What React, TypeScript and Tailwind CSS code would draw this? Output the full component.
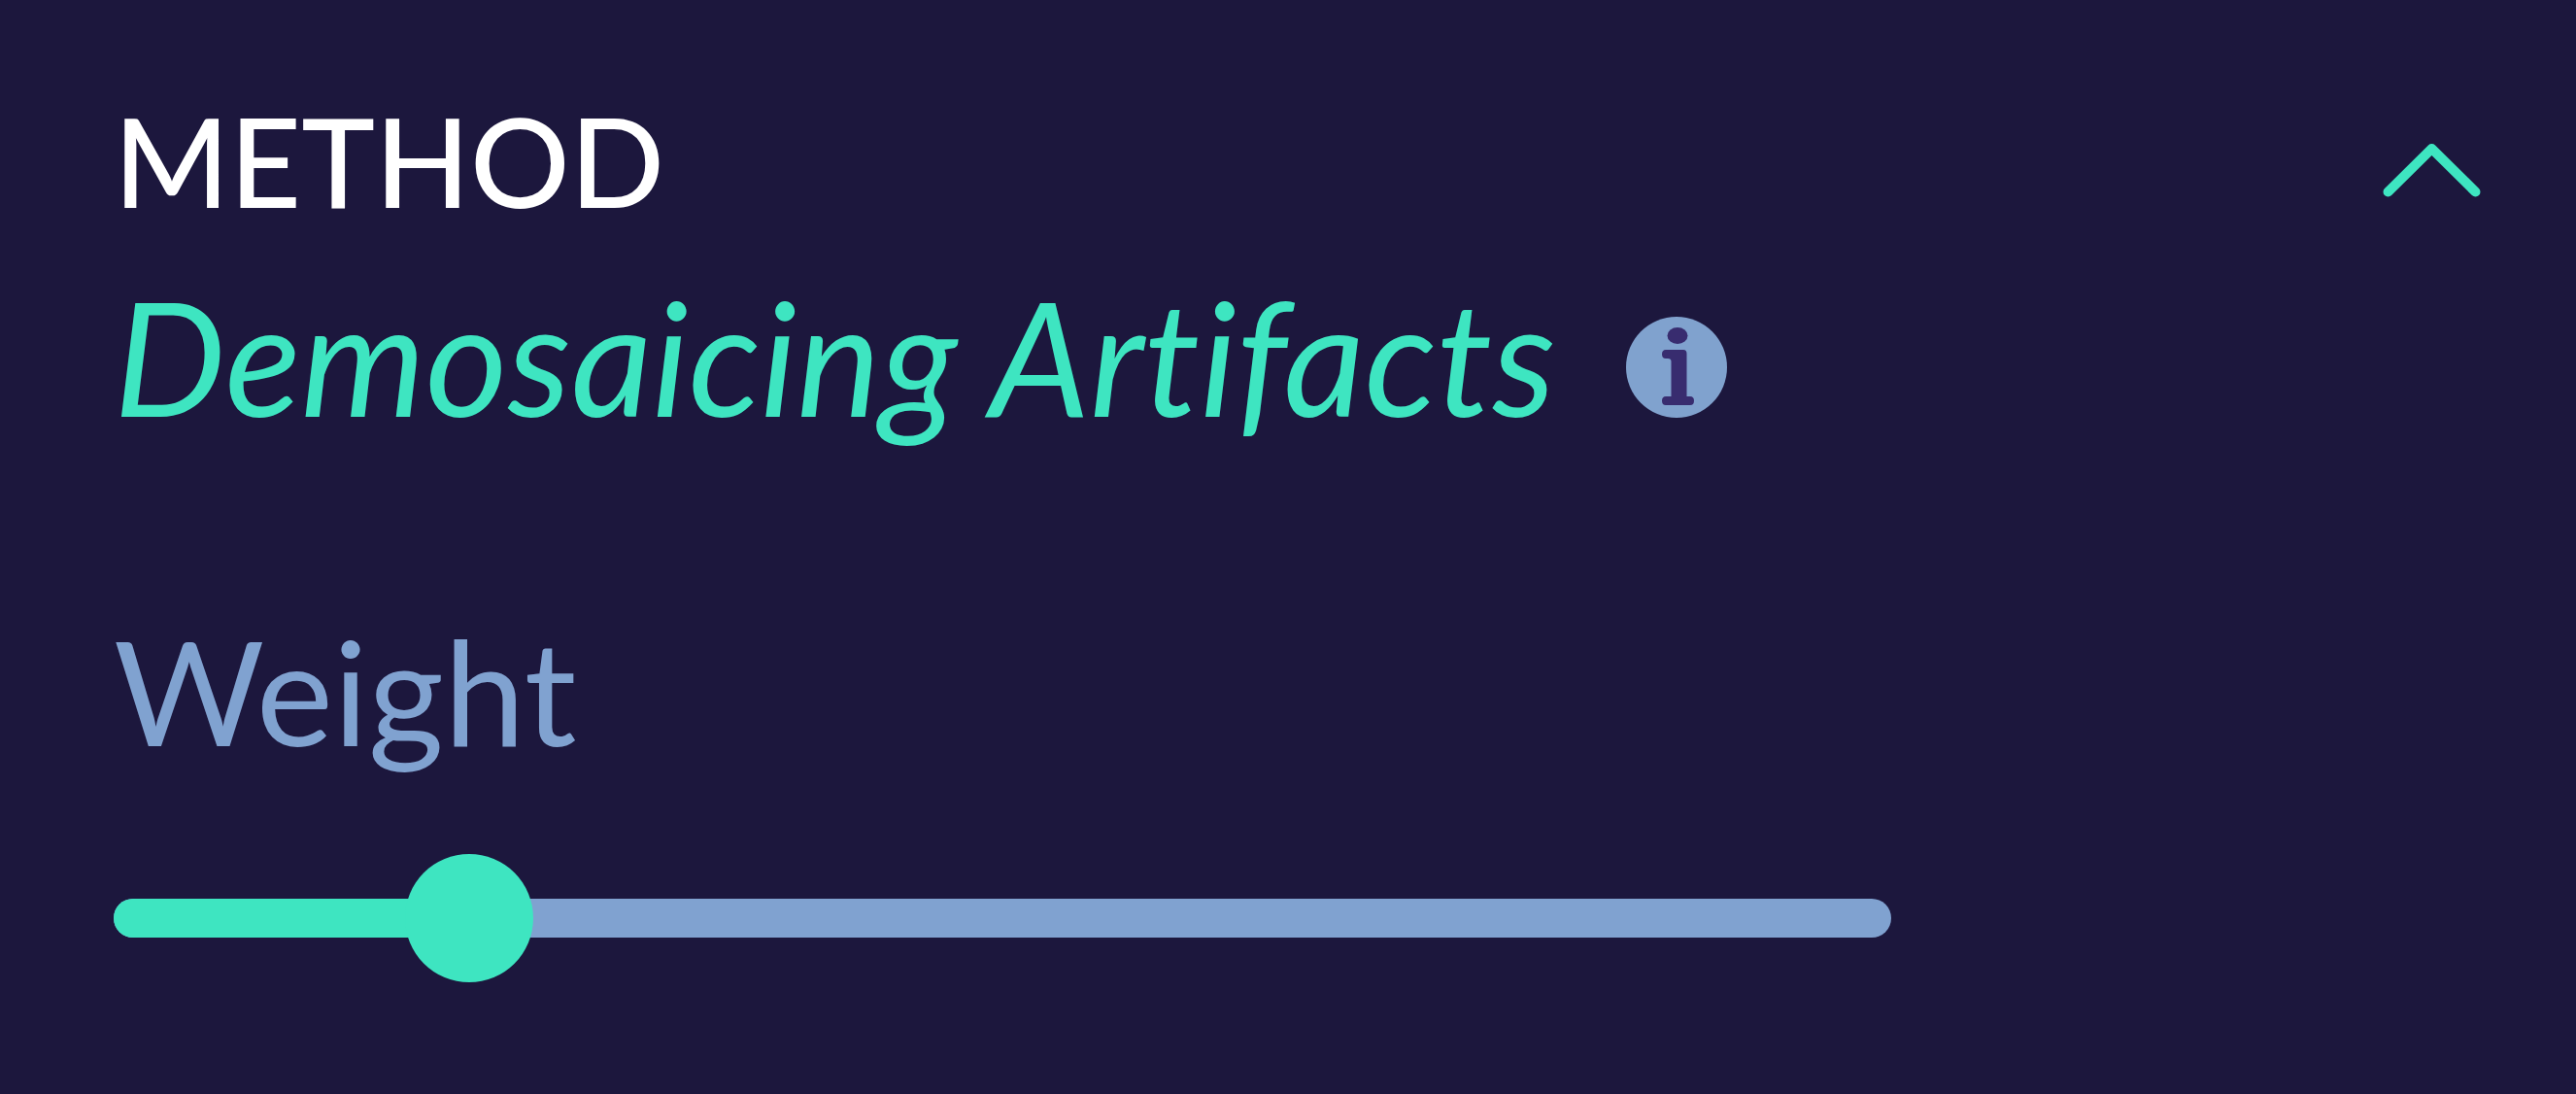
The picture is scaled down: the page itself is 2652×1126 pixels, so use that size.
import { useState } from "react";

function ChevronUp() {
  return (
    <svg viewBox="0 0 106 60" className="h-[60px] w-[106px]" fill="none" aria-hidden="true">
      <path
        d="M7.5 52.5L52.5 8L97.5 52.5"
        stroke="#3ee5c1"
        strokeWidth="10"
        strokeLinecap="round"
        strokeLinejoin="round"
      />
    </svg>
  );
}

function InfoIcon() {
  return (
    <svg viewBox="0 0 104 104" className="size-[104px]" aria-hidden="true">
      <circle cx="52" cy="52" r="52" fill="#80a2ce" />
      <g fill="#382c6f">
        <ellipse cx="53" cy="19.5" rx="10.5" ry="8.5" />
        <path d="M41 34H59Q62.5 34 62.5 38V82H66Q70 82 70 86.5Q70 91 66 91H41Q37 91 37 86.5Q37 82 41 82H46.5V46Q46.5 43 43 43H41Q37 43 37 38.5Q37 34 41 34Z" />
      </g>
    </svg>
  );
}

export default function App() {
  const [open, setOpen] = useState(true);
  const [weight, setWeight] = useState(20);

  return (
    <main className="min-h-screen bg-[#1c173d] pt-[101px] pr-[95px] pb-[100px] pl-[117px] font-['Lato',sans-serif]">
      <header className="flex items-center justify-between">
        <h2 className="text-[128px] leading-[128px] font-medium text-white">METHOD</h2>
        <button
          type="button"
          aria-label="Toggle method"
          aria-expanded={open}
          onClick={() => setOpen(!open)}
          className="pt-5"
        >
          <ChevronUp />
        </button>
      </header>
      {open && (
        <>
          <div className="mt-[73px] flex items-end gap-[72px]">
            <p className="text-[163px] leading-[128px] whitespace-nowrap text-[#3ee5c1] italic [font-variant-ligatures:none]">
              Demosaicing Artifacts
            </p>
            <button type="button" aria-label="About demosaicing artifacts">
              <InfoIcon />
            </button>
          </div>
          <label htmlFor="weight" className="mt-[205px] block text-[150px] leading-[150px] text-[#80a2d0]">
            Weight
          </label>
          <div className="relative mt-[94px] flex h-[132px] w-3/4 items-center">
            <div className="h-10 w-full overflow-hidden rounded-full bg-[#80a2d0]">
              <div className="h-full bg-[#3ee5c1]" style={{ width: `${weight}%` }} />
            </div>
            <input
              id="weight"
              type="range"
              min={0}
              max={100}
              value={weight}
              onChange={(e) => setWeight(Number(e.target.value))}
              className="absolute inset-y-0 -left-[66px] h-full w-[calc(100%+132px)] cursor-pointer appearance-none bg-transparent [&::-webkit-slider-thumb]:size-[132px] [&::-webkit-slider-thumb]:appearance-none [&::-webkit-slider-thumb]:rounded-full [&::-webkit-slider-thumb]:bg-[#3ee5c1]"
            />
          </div>
        </>
      )}
    </main>
  );
}
